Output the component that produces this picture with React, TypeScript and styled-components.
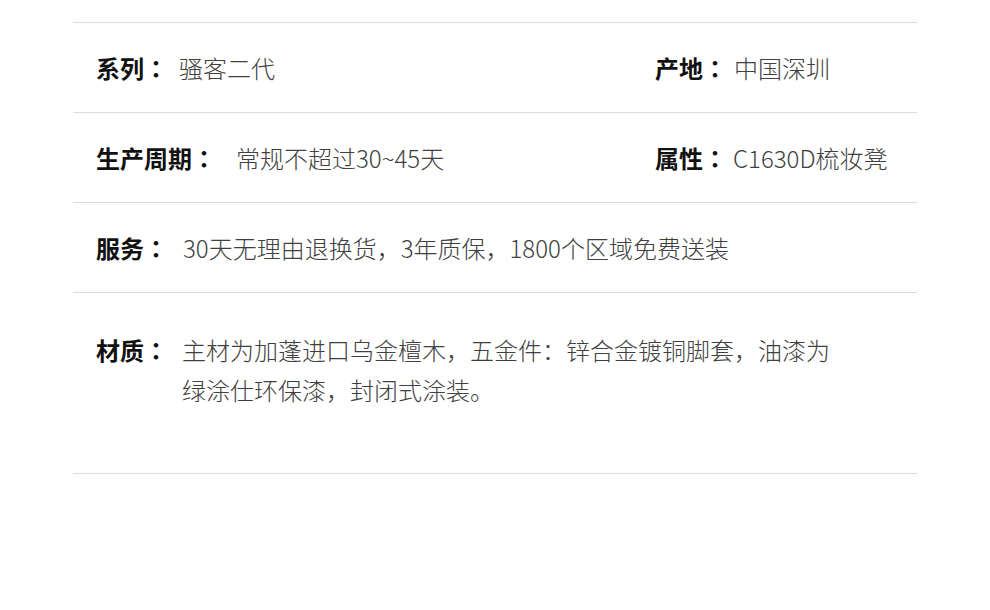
import React from "react";
import styled, { createGlobalStyle } from "styled-components";

const Global = createGlobalStyle`
  html, body { margin: 0; padding: 0; background: #ffffff; }
  body { font-family: "Noto Sans CJK SC", "Noto Sans", sans-serif; }
`;

const Sheet = styled.section`
  width: 844px;
  margin: 0 auto;
  padding-top: 22px;
`;

const Row = styled.div<{ $top?: number; $bottom?: number }>`
  display: grid;
  grid-template-columns: 559px 1fr;
  align-items: start;
  border-top: 1px solid #dcdcdc;
  padding: ${(p) => p.$top ?? 25}px 0 ${(p) => p.$bottom ?? 24}px 23px;
`;

const Closing = styled.div`
  border-top: 1px solid #dcdcdc;
`;

const Cell = styled.div<{ $span?: boolean }>`
  display: flex;
  align-items: flex-start;
  grid-column: ${(p) => (p.$span ? "1 / -1" : "auto")};
`;

const Label = styled.span<{ $gap: number }>`
  flex: none;
  font-size: 24px;
  line-height: 40px;
  font-weight: 700;
  color: #111111;
  margin-right: ${(p) => p.$gap}px;
  white-space: nowrap;
`;

const Colon = styled.span`
  font-family: "Noto Sans CJK TC", "Noto Sans CJK SC", sans-serif;
`;

const Value = styled.span<{ $max?: number }>`
  font-size: 24px;
  line-height: 40px;
  font-weight: 300;
  color: #404040;
  max-width: ${(p) => (p.$max ? `${p.$max}px` : "none")};
`;

function Field({ label, gap, children, max }: { label: string; gap: number; children: React.ReactNode; max?: number }) {
  return (
    <>
      <Label $gap={gap}>
        {label}
        <Colon>：</Colon>
      </Label>
      <Value $max={max}>{children}</Value>
    </>
  );
}

export default function App() {
  return (
    <>
      <Global />
      <Sheet>
        <Row>
          <Cell>
            <Field label="系列" gap={11}>骚客二代</Field>
          </Cell>
          <Cell>
            <Field label="产地" gap={7}>中国深圳</Field>
          </Cell>
        </Row>
        <Row>
          <Cell>
            <Field label="生产周期" gap={20}>常规不超过30~45天</Field>
          </Cell>
          <Cell>
            <Field label="属性" gap={6}>C1630D梳妆凳</Field>
          </Cell>
        </Row>
        <Row>
          <Cell $span>
            <Field label="服务" gap={15}>30天无理由退换货，3年质保，1800个区域免费送装</Field>
          </Cell>
        </Row>
        <Row $top={37} $bottom={63}>
          <Cell $span>
            <Field label="材质" gap={14} max={660}>
              主材为加蓬进口乌金檀木，五金件：锌合金镀铜脚套，油漆为绿涂仕环保漆，封闭式涂装。
            </Field>
          </Cell>
        </Row>
        <Closing />
      </Sheet>
    </>
  );
}
